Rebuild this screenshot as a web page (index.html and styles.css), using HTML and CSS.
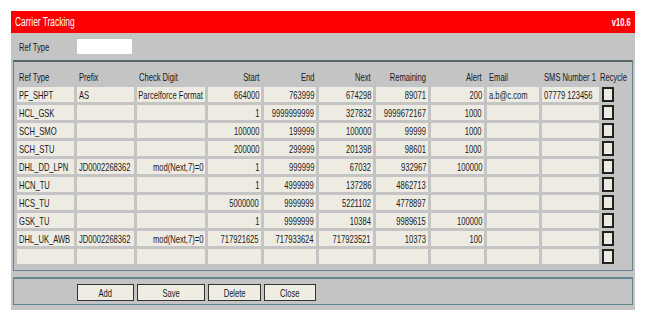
FILE: index.html
```html
<!DOCTYPE html>
<html lang="en">
<head>
    <meta charset="UTF-8">
    <title>Carrier Tracking</title>
    <link rel="stylesheet" href="styles.css">
</head>
<body>
    <div class="window">
        <div class="titlebar">
            <span class="t">Carrier Tracking</span>
            <span class="t version">v10.6</span>
        </div>

        <div class="filter">
            <label class="filter-label"><span class="t">Ref Type</span></label>
            <div class="filter-input"></div>
        </div>

        <div class="panel table-panel">
            <div class="grid" id="grid">
                <div class="head"><span class="t">Ref Type</span></div>
                <div class="head"><span class="t">Prefix</span></div>
                <div class="head"><span class="t">Check Digit</span></div>
                <div class="head num"><span class="t">Start</span></div>
                <div class="head num"><span class="t">End</span></div>
                <div class="head num"><span class="t">Next</span></div>
                <div class="head num"><span class="t">Remaining</span></div>
                <div class="head num"><span class="t">Alert</span></div>
                <div class="head"><span class="t">Email</span></div>
                <div class="head"><span class="t">SMS Number 1</span></div>
                <div class="head head-last"><span class="t">Recycle</span></div>
            </div>
        </div>

        <div class="panel button-panel">
            <div class="grid">
                <button class="btn col-2"><span class="t">Add</span></button>
                <button class="btn"><span class="t">Save</span></button>
                <button class="btn"><span class="t">Delete</span></button>
                <button class="btn"><span class="t">Close</span></button>
            </div>
        </div>
    </div>

    <script>
        const rows = [
            ['PF_SHPT', 'AS', 'Parcelforce Format', '664000', '763999', '674298', '89071', '200', 'a.b@c.com', '07779 123456'],
            ['HCL_GSK', '', '', '1', '9999999999', '327832', '9999672167', '1000', '', ''],
            ['SCH_SMO', '', '', '100000', '199999', '100000', '99999', '1000', '', ''],
            ['SCH_STU', '', '', '200000', '299999', '201398', '98601', '1000', '', ''],
            ['DHL_DD_LPN', 'JD0002268362', 'mod(Next,7)=0', '1', '999999', '67032', '932967', '100000', '', ''],
            ['HCN_TU', '', '', '1', '4999999', '137286', '4862713', '', '', ''],
            ['HCS_TU', '', '', '5000000', '9999999', '5221102', '4778897', '', '', ''],
            ['GSK_TU', '', '', '1', '9999999', '10384', '9989615', '100000', '', ''],
            ['DHL_UK_AWB', 'JD0002268362', 'mod(Next,7)=0', '717921625', '717933624', '717923521', '10373', '100', '', ''],
            ['', '', '', '', '', '', '', '', '', '']
        ];

        // columns 2..7 are right aligned
        const rightCols = [2, 3, 4, 5, 6, 7];
        const grid = document.getElementById('grid');

        rows.forEach(function(row) {
            row.forEach(function(value, i) {
                const cell = document.createElement('div');
                cell.className = rightCols.includes(i) ? 'cell num' : 'cell';
                if (value) {
                    const text = document.createElement('span');
                    text.className = 't';
                    text.textContent = value;
                    cell.appendChild(text);
                }
                grid.appendChild(cell);
            });
            const box = document.createElement('div');
            box.innerHTML = '<span class="check"></span>';
            grid.appendChild(box);
        });
    </script>
</body>
</html>
```

FILE: styles.css
```css
body {
    margin: 0;
    padding: 11px;
    background-color: #fff;
    font-family: "Liberation Sans", Arial, sans-serif;
    font-size: 11.5px;
    color: #1a1a1a;
}
/* the app font is a tall condensed face */
.t {
    display: inline-block;
    white-space: nowrap;
    flex-shrink: 0;
    transform: scaleX(0.66);
    transform-origin: left center;
}
.window {
    width: 624px;
    background-color: #c4c4c4;
    padding-bottom: 5px;
}
.titlebar {
    height: 22px;
    background-color: #ff0000;
    color: #fff;
    display: flex;
    justify-content: space-between;
    align-items: center;
    padding: 0 4px;
    font-size: 12.5px;
}
.titlebar .t { transform: scaleX(0.67); }
.titlebar .version {
    font-weight: bold;
    font-size: 11.5px;
    transform: scaleX(0.66);
    transform-origin: right center;
}
.filter {
    margin: 0 2px;
    height: 27px;
    display: flex;
    align-items: flex-start;
    padding: 6px 0 0 6px;
    box-sizing: border-box;
}
.filter-label {
    width: 58px;
    line-height: 15px;
    padding-top: 1px;
}
.filter-input {
    width: 55px;
    height: 15px;
    background-color: #fff;
}
.panel {
    margin: 0 2px;
    border: 1px solid #5e8793;
    border-top: 2px solid #56666b;
    padding: 0 3px;
}
.table-panel { padding-bottom: 6px; }
.button-panel {
    margin-top: 6px;
    padding-top: 5px;
    padding-bottom: 5px;
    border-top-color: #5e8793;
}
.grid {
    display: grid;
    grid-template-columns: 57px 57px 68px 53px 52px 54px 52px 53px 52px 57px 1fr;
    grid-auto-rows: 15px;
    gap: 3px;
}
#grid { grid-template-rows: 22px; }
.head {
    display: flex;
    align-items: flex-end;
    padding: 0 2px 1px;
}
.head-last { padding-left: 0; margin-left: -2px; }
.cell {
    display: flex;
    align-items: center;
    background-color: #eeebe3;
    padding: 0 2px;
    overflow: hidden;
}
.num { justify-content: flex-end; }
.num .t { transform-origin: right center; }
.check {
    display: block;
    width: 12px;
    height: 15px;
    box-sizing: border-box;
    border: 2px solid #222;
    background-color: #eeebe3;
}
.btn {
    height: 17px;
    padding: 0;
    background-color: #efece4;
    border: 1px solid #333;
    font-family: inherit;
    font-size: 11.5px;
    color: #1a1a1a;
}
.btn .t { transform-origin: center; }
.col-2 { grid-column: 2; }
```
